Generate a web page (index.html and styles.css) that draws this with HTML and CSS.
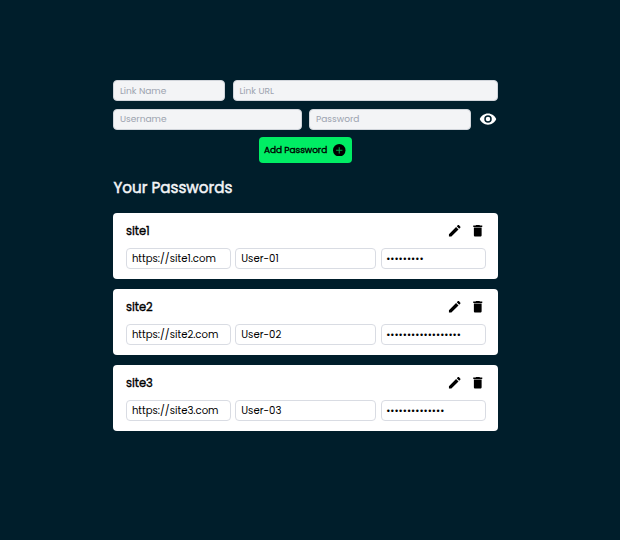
FILE: index.html
```html
<!DOCTYPE html>
<html lang="en">
<head>
<meta charset="utf-8">
<title>Passwords</title>
<link rel="stylesheet" href="styles.css">
</head>
<body>
<svg class="sprite" width="0" height="0">
  <symbol id="pencil" viewBox="0 0 24 24"><path d="M3 17.25V21h3.75L17.81 9.94l-3.75-3.75L3 17.25zM20.71 7.04a1 1 0 0 0 0-1.41l-2.34-2.34a1 1 0 0 0-1.41 0l-1.83 1.83 3.75 3.75 1.83-1.83z"/></symbol>
  <symbol id="trash" viewBox="0 0 24 24"><path d="M6 19c0 1.100.9 2 2 2h8c1.100 0 2-.9 2-2V7H6v12zM19 4h-3.500l-1-1h-5l-1 1H5v2h14V4z"/></symbol>
</svg>
<main class="container">
  <form class="form">
    <div class="row row-link">
      <input class="field" type="text" placeholder="Link Name">
      <input class="field" type="text" placeholder="Link URL">
    </div>
    <div class="row row-user">
      <input class="field" type="text" placeholder="Username">
      <input class="field" type="text" placeholder="Password">
      <svg class="eye" viewBox="0 0 24 24"><path d="M12 4.500C7 4.500 2.730 7.610 1 12c1.730 4.390 6 7.500 11 7.500s9.270-3.110 11-7.500c-1.730-4.390-6-7.500-11-7.500zM12 17a5 5 0 1 1 0-10 5 5 0 0 1 0 10zm0-8a3 3 0 1 0 0 6 3 3 0 0 0 0-6z"/></svg>
    </div>
    <button class="add" type="button"><span class="add-label">Add Password</span>
      <svg class="plus" viewBox="0 0 24 24"><circle cx="12" cy="12" r="12"/><path d="M12 6v12M6 12h12"/></svg>
    </button>
  </form>
  <h1 class="title">Your Passwords</h1>
  <section class="list">
    <article class="card">
      <header class="card-head"><h2 class="name">site1</h2><div class="actions"><svg><use href="#pencil"/></svg><svg><use href="#trash"/></svg></div></header>
      <div class="values"><div class="value">https://site1.com</div><div class="value user">User-01</div><div class="value dots">•••••••••</div></div>
    </article>
    <article class="card">
      <header class="card-head"><h2 class="name">site2</h2><div class="actions"><svg><use href="#pencil"/></svg><svg><use href="#trash"/></svg></div></header>
      <div class="values"><div class="value">https://site2.com</div><div class="value user">User-02</div><div class="value dots">••••••••••••••••••</div></div>
    </article>
    <article class="card">
      <header class="card-head"><h2 class="name">site3</h2><div class="actions"><svg><use href="#pencil"/></svg><svg><use href="#trash"/></svg></div></header>
      <div class="values"><div class="value">https://site3.com</div><div class="value user">User-03</div><div class="value dots">••••••••••••••</div></div>
    </article>
  </section>
</main>
</body>
</html>
```
FILE: styles.css
```css
* { box-sizing: border-box; }
body {
  margin: 0;
  min-height: 540px;
  background: #001e2b;
  font-family: Poppins, Inter, sans-serif;
  color: #000;
}
.sprite { display: none; }
.container { width: 384.500px; margin-left: 113.400px; padding-top: 80px; }
.form { display: flex; flex-direction: column; gap: 7.300px; }
.row { display: grid; column-gap: 8px; align-items: center; }
.row-link { grid-template-columns: 111.500px 1fr; }
.row-user { grid-template-columns: 188.500px 162px 18px; column-gap: 7.600px; }
.field {
  width: 100%;
  min-width: 0;
  height: 21.300px;
  padding: 0 5.500px;
  border: 1px solid #d1d5db;
  border-radius: 4px;
  background: #f3f4f6;
  font: 9.050px Poppins, Inter, sans-serif;
}
.field::placeholder { color: #9ca3af; opacity: 1; }
.eye { width: 18px; height: 18px; margin-left: 0.300px; fill: #fff; }
.add {
  align-self: center;
  display: flex;
  align-items: center;
  justify-content: space-between;
  width: 93.500px;
  height: 25.500px;
  margin: 0;
  padding: 0 6.500px 0 5px;
  border: 0;
  border-radius: 4px;
  background: #00ed64;
  color: #000;
  font: 400 9px Poppins, Inter, sans-serif;
  letter-spacing: -0.050px;
  -webkit-text-stroke: 0.350px currentColor;
}
.add-label { margin-top: 1.500px; white-space: nowrap; }
.plus { width: 12.500px; height: 12.500px; }
.plus path { stroke: #00a949; stroke-width: 2; }
.title {
  margin: 13px 0 0;
  height: 24px;
  line-height: 24px;
  font-size: 15.200px;
  font-weight: 400;
  -webkit-text-stroke: 0.500px currentColor;
  color: #f3f4f6;
  white-space: nowrap;
}
.list { display: flex; flex-direction: column; gap: 9.700px; margin-top: 13px; }
.card { height: 66.300px; padding: 9px 12.500px; background: #fff; border-radius: 4px; }
.card-head { display: flex; justify-content: space-between; align-items: center; height: 18px; }
.name { margin: 2px 0 0; font-size: 11.500px; font-weight: 400; -webkit-text-stroke: 0.350px currentColor; }
.actions { display: flex; gap: 7px; }
.actions svg { width: 15.500px; height: 15.500px; }
.values { display: grid; grid-template-columns: 105px 141px 105px; column-gap: 4.400px; margin-top: 8px; }
.value {
  height: 21.500px;
  padding-left: 5px;
  border: 1px solid #d9dce3;
  border-radius: 4px;
  font-size: 10.150px;
  line-height: 20px;
  white-space: nowrap;
}
.dots { font-family: "Liberation Sans", sans-serif; font-size: 9px; letter-spacing: 1px; line-height: 20px; }
```
